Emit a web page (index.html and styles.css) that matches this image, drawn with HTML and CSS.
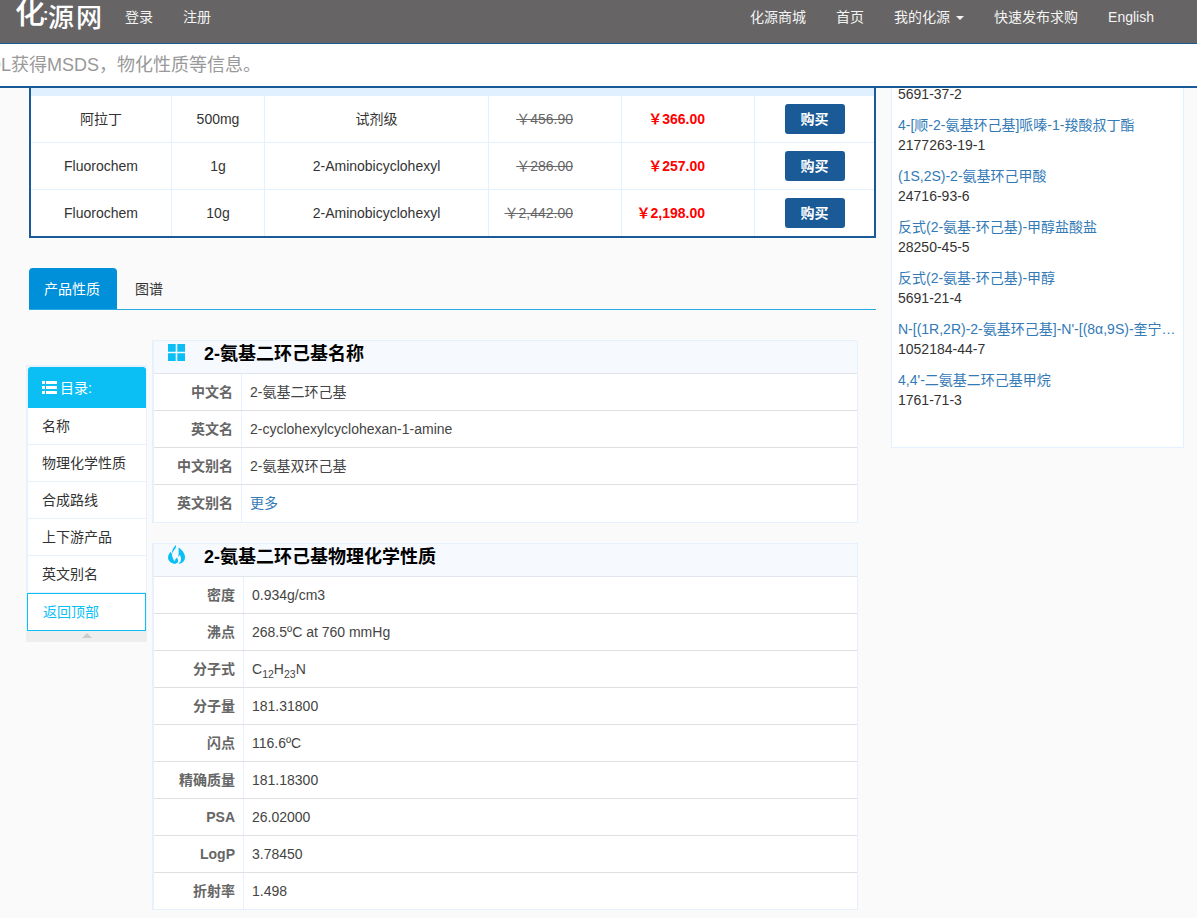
FILE: index.html
```html
<!DOCTYPE html>
<html lang="zh-CN">
<head>
<meta charset="utf-8">
<title>2-氨基二环己基</title>
<link rel="stylesheet" href="styles.css">
</head>
<body>
<header class="topbar">
  <a class="logo"><span class="logo-a">化</span><span class="logo-dot">:</span><span class="logo-b">源网</span></a>
  <nav class="nav nav-left"><a>登录</a><a>注册</a></nav>
  <nav class="nav nav-right">
    <a>化源商城</a><a>首页</a><a>我的化源<i class="caret"></i></a><a>快速发布求购</a><a>English</a>
  </nav>
</header>
<div class="searchbar"><span>OL获得MSDS，物化性质等信息。</span></div>
<div class="page">
  <main class="main">
    <div class="price-box">
      <div class="price-strip"></div>
      <table class="price-table">
        <colgroup><col class="c1"><col class="c2"><col class="c3"><col class="c4"><col class="c5"><col class="c6"></colgroup>
        <tr><td>阿拉丁</td><td>500mg</td><td>试剂级</td><td class="old"><s>￥456.90</s></td><td class="new">￥366.00</td><td><a class="buy">购买</a></td></tr>
        <tr><td>Fluorochem</td><td>1g</td><td>2-Aminobicyclohexyl</td><td class="old"><s>￥286.00</s></td><td class="new">￥257.00</td><td><a class="buy">购买</a></td></tr>
        <tr><td>Fluorochem</td><td>10g</td><td>2-Aminobicyclohexyl</td><td class="old"><s>￥2,442.00</s></td><td class="new">￥2,198.00</td><td><a class="buy">购买</a></td></tr>
      </table>
    </div>
    <div class="tabs"><a class="tab active">产品性质</a><a class="tab">图谱</a></div>
    <div class="details">
      <aside class="toc">
        <div class="toc-head">
          <svg class="toc-icon" viewBox="0 0 15 13"><path fill="#fff" d="M0 0h3v3H0zM4 0h11v3H4zM0 5h3v3H0zM4 5h11v3H4zM0 10h3v3H0zM4 10h11v3H4z"/></svg>目录:
        </div>
        <a class="toc-item">名称</a>
        <a class="toc-item">物理化学性质</a>
        <a class="toc-item">合成路线</a>
        <a class="toc-item">上下游产品</a>
        <a class="toc-item">英文别名</a>
        <a class="toc-top">返回顶部</a>
        <div class="toc-foot"><i class="toc-arrow"></i></div>
      </aside>
      <div class="sections">
        <section class="sec">
          <h3 class="sec-head">
            <svg class="sec-icon" viewBox="0 0 17 17"><path fill="#0bbff5" d="M0 0h7.700v7.700H0zM9.300 0H17v7.700H9.300zM0 9.300h7.700V17H0zM9.300 9.300H17V17H9.300z"/></svg>2-氨基二环己基名称
          </h3>
          <div class="row"><div class="lab">中文名</div><div class="val">2-氨基二环己基</div></div>
          <div class="row"><div class="lab">英文名</div><div class="val">2-cyclohexylcyclohexan-1-amine</div></div>
          <div class="row"><div class="lab">中文别名</div><div class="val">2-氨基双环己基</div></div>
          <div class="row"><div class="lab">英文别名</div><div class="val"><a class="link">更多</a></div></div>
        </section>
        <section class="sec sec-wide">
          <h3 class="sec-head">
            <svg class="sec-icon" viewBox="0 0 17 19"><path fill="#0bbff5" d="M8 0c.5 2.500-1 4-2.500 6C4 8 3.500 10 4.500 12 5 14 6 15.500 7.500 16.500 8 17.500 8 18.500 7.500 19 3.500 18.500 0 16 0 12.500 0 10 1.500 8.500 2.500 6.500 3 8 3.500 8.500 4 8.500 3.800 5 5.500 2 8 0zM10.500 2.500c3 2 6.500 5.500 6.500 10 0 3.500-3 6-6.500 6.500 1.500-1.500 2.500-3 2.500-5 0-1.500-.5-3-1.500-4-.2 1-.7 1.800-1.300 2.300.7-3.500.5-6.500.3-9.800zM8.800 12.500c1 1.500 1.700 2.800 1.300 4-.3 1-1 1.500-1.500 2-1-1-1.800-2.200-1.500-3.500.2-1 1.200-1.500 1.700-2.500z"/></svg>2-氨基二环己基物理化学性质
          </h3>
          <div class="row"><div class="lab">密度</div><div class="val">0.934g/cm3</div></div>
          <div class="row"><div class="lab">沸点</div><div class="val">268.5ºC at 760 mmHg</div></div>
          <div class="row"><div class="lab">分子式</div><div class="val">C<sub>12</sub>H<sub>23</sub>N</div></div>
          <div class="row"><div class="lab">分子量</div><div class="val">181.31800</div></div>
          <div class="row"><div class="lab">闪点</div><div class="val">116.6ºC</div></div>
          <div class="row"><div class="lab">精确质量</div><div class="val">181.18300</div></div>
          <div class="row"><div class="lab">PSA</div><div class="val">26.02000</div></div>
          <div class="row"><div class="lab">LogP</div><div class="val">3.78450</div></div>
          <div class="row"><div class="lab">折射率</div><div class="val">1.498</div></div>
        </section>
      </div>
    </div>
  </main>
  <aside class="related">
    <div class="rel rel-first"><div class="cas">5691-37-2</div></div>
    <div class="rel"><a class="rel-name">4-[顺-2-氨基环己基]哌嗪-1-羧酸叔丁酯</a><div class="cas">2177263-19-1</div></div>
    <div class="rel"><a class="rel-name">(1S,2S)-2-氨基环己甲酸</a><div class="cas">24716-93-6</div></div>
    <div class="rel"><a class="rel-name">反式(2-氨基-环己基)-甲醇盐酸盐</a><div class="cas">28250-45-5</div></div>
    <div class="rel"><a class="rel-name">反式(2-氨基-环己基)-甲醇</a><div class="cas">5691-21-4</div></div>
    <div class="rel"><a class="rel-name">N-[(1R,2R)-2-氨基环己基]-N'-[(8α,9S)-奎宁-9-基]硫脲</a><div class="cas">1052184-44-7</div></div>
    <div class="rel"><a class="rel-name">4,4'-二氨基二环己基甲烷</a><div class="cas">1761-71-3</div></div>
  </aside>
</div>
</body>
</html>
```
FILE: styles.css
```css
* { box-sizing: border-box; }
html, body { margin: 0; height: 918px; overflow: hidden; }
body {
  background: #fafafa;
  color: #333;
  font: 14px/20px "Liberation Sans", "Noto Sans CJK SC", sans-serif;
}
a { text-decoration: none; }

.topbar {
  display: flex;
  height: 44px;
  background: #666464;
  border-bottom: 1px solid #1a5a96;
  color: #fff;
  overflow: hidden;
}
.logo {
  display: flex;
  width: 95px;
  margin-left: 15px;
  color: #fff;
  white-space: nowrap;
}
.logo-a { width: 28px; font-size: 30px; line-height: 26px; font-weight: 500; }
.logo-dot { width: 5px; font: 700 16px/30px "Liberation Sans", sans-serif; }
.logo-b { font-size: 26px; line-height: 30px; letter-spacing: 2px; margin-top: 3px; font-weight: 500; }
.nav { display: flex; padding-top: 7px; }
.nav a { color: #f4f4f4; padding: 0 15px; white-space: nowrap; }
.nav-right { margin-left: auto; padding-right: 28px; }
.caret {
  display: inline-block;
  margin-left: 6px;
  vertical-align: middle;
  border-top: 4px solid #f4f4f4;
  border-left: 4px solid transparent;
  border-right: 4px solid transparent;
}

.searchbar {
  height: 44px;
  background: #fff;
  border-bottom: 2px solid #1a5a96;
  color: #999;
  font-size: 18px;
  line-height: 43px;
  overflow: hidden;
  white-space: nowrap;
}
.searchbar span { display: block; margin-left: -13px; }

.page { display: flex; align-items: flex-start; }
.main { width: 847px; margin-left: 29px; }

.price-box { border: 2px solid #1a5a96; border-top: 0; background: #fff; }
.price-strip { height: 8px; background: #e0f0ff; }
.price-table { width: 843px; border-collapse: separate; border-spacing: 0; table-layout: fixed; }
.c1 { width: 141px; } .c2 { width: 93px; } .c3 { width: 224px; }
.c4 { width: 133px; } .c5 { width: 133px; } .c6 { width: 119px; }
.price-table td {
  height: 47px;
  padding: 0;
  text-align: center;
  border-right: 1px solid #e3f0fd;
  border-bottom: 1px solid #e3f0fd;
}
.price-table tr:last-child td { height: 46px; border-bottom: 0; }
.price-table td:last-child { border-right: 0; }
.price-table .old { text-align: right; padding-right: 48px; color: #666; }
.price-table .new { text-align: right; padding-right: 49px; color: #f00; font-weight: 700; }
.buy {
  display: inline-block;
  width: 60px;
  height: 30px;
  line-height: 30px;
  border-radius: 3px;
  background: #1a5a96;
  color: #fff;
  font-weight: 700;
  vertical-align: middle;
}

.tabs {
  display: flex;
  height: 42px;
  margin-top: 30px;
  border-bottom: 1px solid #29abe2;
}
.tab { height: 41px; padding: 0 15px; line-height: 42px; color: #333; }
.tab + .tab { padding-left: 18px; }
.tab.active { width: 88px; background: #0090d9; color: #fff; border-radius: 4px 4px 0 0; }

.details { display: flex; align-items: flex-start; margin: 30px 0 0 -2px; }

.toc {
  width: 121px;
  margin: 25px 0 0 -1px;
  background: #fff;
  border: 1px solid #e8f2fd;
  border-width: 2px 1px 0 2px;
}
.toc-head {
  display: flex;
  align-items: center;
  height: 41px;
  padding-left: 14px;
  background: #0bbff5;
  color: #fff;
  border-radius: 3px 3px 0 0;
}
.toc-icon { width: 15px; height: 13px; margin-right: 3px; }
.toc-item {
  display: block;
  height: 37px;
  padding-left: 14px;
  line-height: 36px;
  color: #333;
  border-bottom: 1px solid #e8f2fd;
}
.toc-top {
  display: block;
  height: 38px;
  margin: 0 0 0 -1px;
  padding-left: 15px;
  line-height: 36px;
  color: #0bbff5;
  border: 1px solid #0bbff5;
}
.toc-foot {
  display: flex;
  justify-content: center;
  height: 11px;
  margin: 0 -1px 0 -2px;
  padding-top: 2px;
  background: #eee;
}
.toc-arrow {
  width: 0;
  height: 0;
  border-bottom: 5px solid #ccc;
  border-left: 5px solid transparent;
  border-right: 5px solid transparent;
}

.sections { width: 706px; margin-left: 5px; }
.sec { --lab: 88px; border: 1px solid #e6f1fd; border-left-width: 2px; background: #fff; }
.sec-wide { --lab: 90px; margin-top: 20px; }
.sec-head {
  display: flex;
  align-items: flex-start;
  height: 33px;
  margin: 0;
  padding-left: 14px;
  background: #f6faff;
  color: #000;
  font-size: 18px;
  line-height: 26px;
  font-weight: 700;
  border-bottom: 1px solid #e0e6ec;
}
.sec-icon { width: 17px; height: 17px; margin: 3px 19px 0 0; flex: none; }
.sec-wide .sec-icon { height: 19px; margin-top: 1px; }
.row { display: flex; height: 37px; border-bottom: 1px solid #e0e0e0; }
.row:last-child { border-bottom: 0; }
.sec-wide .row:last-child { height: 36px; }
.lab {
  width: var(--lab);
  padding-right: 8px;
  line-height: 36px;
  text-align: right;
  font-weight: 700;
  color: #666;
  border-right: 1px solid #e6f1fd;
}
.val { padding-left: 8px; line-height: 36px; color: #444; }
.val sub { font-size: 10.5px; line-height: 0; }
.link { color: #337ab7; }

.related {
  width: 293px;
  height: 360px;
  margin-left: 15px;
  padding: 0 6px;
  background: #fff;
  border: 1px solid #e3f0fd;
  border-top: 0;
  overflow: hidden;
}
.rel { height: 51px; }
.rel-first { height: 27px; line-height: 12px; }
.rel-name {
  display: block;
  color: #337ab7;
  overflow: hidden;
  white-space: nowrap;
  text-overflow: ellipsis;
}
.cas { color: #333; }
```
